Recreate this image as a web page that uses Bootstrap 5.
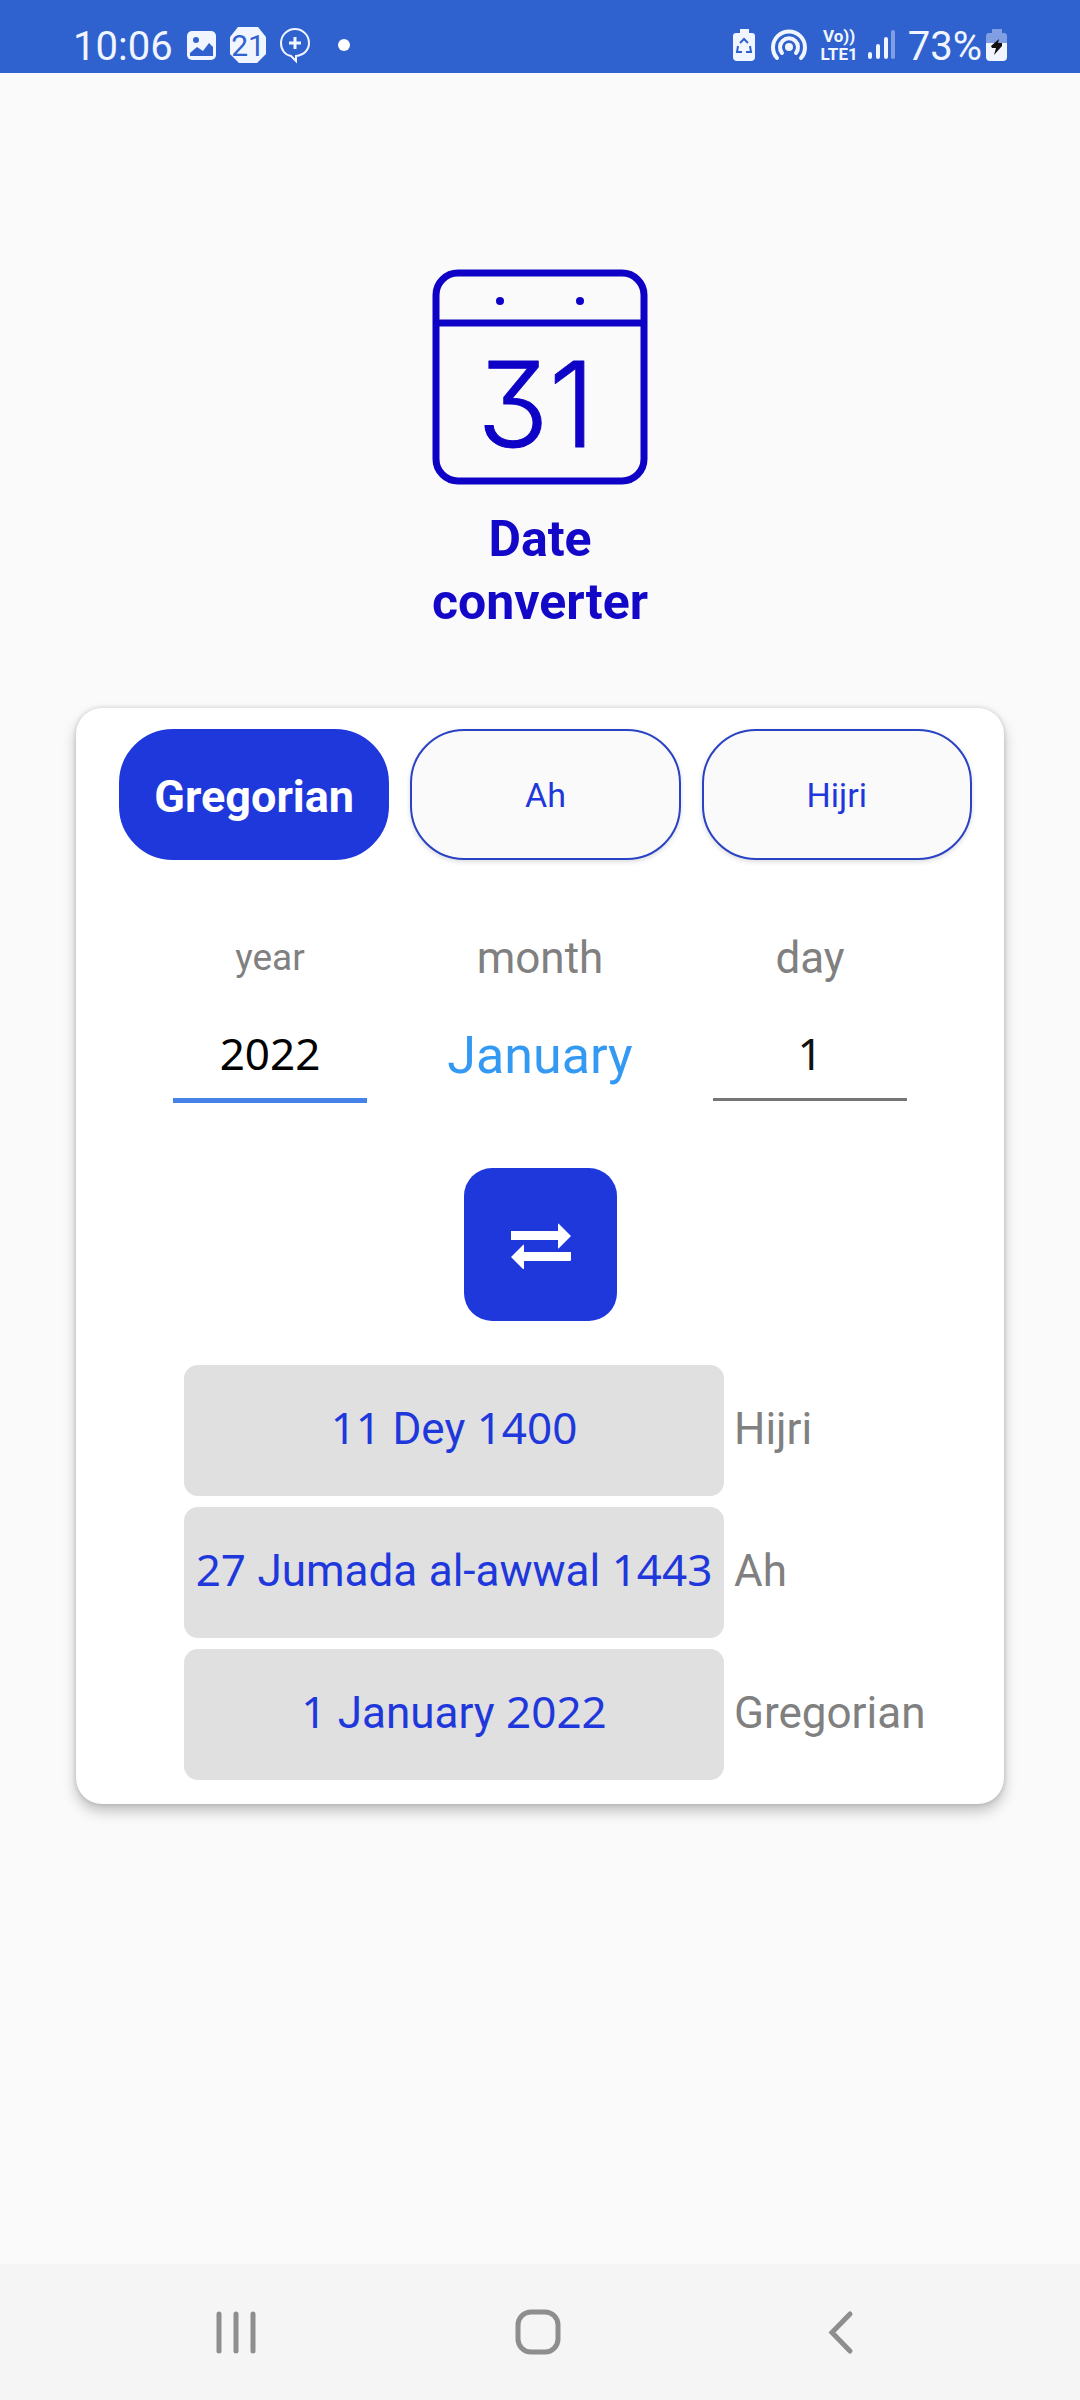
<!DOCTYPE html>
<html lang="en">
<head>
<meta charset="utf-8">
<meta name="viewport" content="width=device-width, initial-scale=1">
<title>Date converter</title>
<link href="https://cdn.jsdelivr.net/npm/bootstrap@5.3.0/dist/css/bootstrap.min.css" rel="stylesheet">
<style>
  :root { --brand: #1f38dc; --ink: #1408c8; --muted: #808080; }
  body { background: #fafafa; font-family: Roboto, sans-serif; font-size: 44px; line-height: 52px; }
  svg { display: block; flex: none; }

  .status-bar { background: #2f62cf; color: #f1f5ff; height: 73px; padding: 18px 72px 0 73px; font-size: 40px; }
  .status-group { height: 54px; }
  .status-text { line-height: 50px; padding-top: 4px; }
  .status-icons { margin-left: 14px; }
  .volte { font-size: 17px; line-height: 18px; font-weight: 700; margin-left: 10px; }
  .badge-text { font-family: Roboto, sans-serif; font-size: 30px; }

  .app-main { padding: 196px 76px 80px; }
  .cal-digits { font-family: Inter, sans-serif; font-weight: 300; font-size: 118px; font-feature-settings: "cv09"; stroke: #0e02c6; stroke-width: 1; stroke-linejoin: round; }
  .app-title { color: var(--ink); font-size: 50px; line-height: 63px; margin: 23px 0 74px; }

  .converter { background: #fff; border: 0; border-radius: 26px; padding: 21px 0 24px; box-shadow: 0 0 4px rgba(0,0,0,.16), 0 7px 14px rgba(0,0,0,.24); }
  .cal-tabs { gap: 21px; padding: 0 32px 0 43px; margin-bottom: 72px; }
  .cal-tab { flex: 1 1 0; min-width: 0; height: 131px; border-radius: 54px; border: 2px solid #2a42c4; background: #fafafa; color: var(--brand); font-size: 34px; padding: 0; box-shadow: 0 2px 5px rgba(0,0,0,.14); }
  .cal-tab.active { background: var(--brand); border-color: var(--brand); color: #fff; font-size: 45px; font-weight: 700; box-shadow: none; padding-top: 4px; }

  .date-fields { padding: 0 59px; margin-bottom: 64px; }
  .date-field { flex: 1 1 0; min-width: 0; }
  .date-field label { color: var(--muted); margin-bottom: 24px; }
  .date-field .label-sm { font-size: 37px; }
  .date-input { width: 72%; height: 93px; border: 0; border-bottom: 3px solid #757575; border-radius: 0; background: transparent; text-align: center; padding: 0; color: #111; font-family: "Noto Sans", sans-serif; outline: 0; }
  .date-input.current { height: 95px; border-bottom: 5px solid #4583e8; color: #000; }
  .month-select { appearance: none; border: 0; background: transparent; color: #3399f3; font-size: 52px; line-height: 72px; height: 96px; width: 100%; padding: 0; text-align: center; text-align-last: center; }

  .swap-btn { width: 153px; height: 153px; border-radius: 28px; border: 0; background: var(--brand); padding: 2px 0 0 2px; margin-bottom: 44px; }

  .results { gap: 11px; padding: 0 20px 0 108px; }
  .result { gap: 10px; color: var(--muted); }
  .result-name { padding-bottom: 4px; }
  .result-value { flex: 0 0 540px; height: 131px; border-radius: 14px; background: #e0e0e0; color: var(--brand); white-space: pre; padding-bottom: 6px; }
  .num { font-family: "Noto Sans", sans-serif; }

  .nav-keys { background: #f5f5f5; height: 136px; }
  .nav-key { flex: 0 0 28%; border: 0; background: transparent; padding: 0; height: 136px; }
</style>
</head>
<body>
<div class="d-flex flex-column min-vh-100">

  <header class="status-bar d-flex justify-content-between align-items-start">
    <div class="status-group d-flex align-items-center">
      <span class="status-text">10:06</span>
      <svg class="status-icons" width="170" height="54" viewBox="187 18 170 54" aria-hidden="true">
        <rect x="187" y="31" width="29" height="29" rx="5" fill="#f1f5ff"/>
        <circle cx="196" cy="40" r="3" fill="#2f62cf"/>
        <path d="M190 56v-3l7-6 6 4 6-8 4 4v9z" fill="#2f62cf"/>
        <path d="M238 27h20l8 10v17l-9 9h-18l-9-9V37z" fill="#f1f5ff"/>
        <text class="badge-text" x="248" y="56" text-anchor="middle" fill="#2f62cf">21</text>
        <path d="M295 29a14 14 0 0 1 14 14c0 7-5 12-13 13v5l-5-5c-6-1-10-6-10-13a14 14 0 0 1 14-14z" fill="none" stroke="#f1f5ff" stroke-width="2"/>
        <path d="M295 37v12M289 43h12" stroke="#f1f5ff" stroke-width="3"/>
        <circle cx="344" cy="45" r="6" fill="#fff"/>
      </svg>
    </div>
    <div class="status-group d-flex align-items-center">
      <svg width="78" height="54" viewBox="731 18 78 54" aria-hidden="true">
        <path d="M738 29h9v4h3q3 0 3 3v21q0 4-4 4h-14q-4 0-4-4V36q0-3 3-3h4z" fill="#f1f5ff"/>
        <path d="M738 43l4-4 4 4M748 46l1 6h-5M736 46l-1 6h5" fill="none" stroke="#2f62cf" stroke-width="2"/>
        <g fill="none" stroke="#f1f5ff" stroke-width="4" stroke-linecap="round">
          <path d="M775 58a16 16 0 1 1 24 0"/>
          <path d="M780 53a9 9 0 1 1 14 0"/>
        </g>
        <circle cx="787" cy="47" r="4" fill="#f1f5ff"/>
      </svg>
      <div class="volte text-center">Vo))<br>LTE1</div>
      <svg class="ms-2" width="42" height="54" viewBox="864 18 42 54" aria-hidden="true">
        <path d="M868 54v3M876 46v11M884 39v18" stroke="#f1f5ff" stroke-width="4" stroke-linecap="round"/>
        <path d="M891 32v25" stroke="#7f9fe2" stroke-width="4" stroke-linecap="round"/>
      </svg>
      <span class="status-text">73%</span>
      <svg class="ms-1" width="22" height="54" viewBox="987 18 22 54" aria-hidden="true">
        <path d="M993 29h10v4h2q3 0 3 3v7h-21v-7q0-3 3-3h3z" fill="#7f9fe2"/>
        <path d="M987 43h21v14q0 4-4 4h-13q-4 0-4-4z" fill="#f1f5ff"/>
        <path d="M1000 39l-8 7 1 2h4l-2 7 8-9v-3h-4z" fill="#111"/>
      </svg>
    </div>
  </header>

  <main class="app-main flex-grow-1">
    <svg class="mx-auto" width="216" height="216" viewBox="0 0 216 216" aria-hidden="true">
      <rect x="4" y="4" width="208" height="208" rx="22" fill="none" stroke="#0e02c6" stroke-width="7"/>
      <path d="M4 54h208" stroke="#0e02c6" stroke-width="7"/>
      <circle cx="68" cy="32" r="4" fill="#0e02c6"/>
      <circle cx="148" cy="32" r="4" fill="#0e02c6"/>
      <text class="cal-digits" x="104" y="178" text-anchor="middle" fill="#0e02c6">31</text>
    </svg>
    <h1 class="app-title fw-bold text-center">Date<br>converter</h1>

    <form class="converter card">
      <div class="cal-tabs d-flex" role="group" aria-label="Calendar">
        <button type="button" class="cal-tab active">Gregorian</button>
        <button type="button" class="cal-tab">Ah</button>
        <button type="button" class="cal-tab">Hijri</button>
      </div>

      <div class="date-fields d-flex">
        <div class="date-field d-flex flex-column align-items-center">
          <label for="year" class="label-sm">year</label>
          <input id="year" class="date-input current" type="text" inputmode="numeric" value="2022">
        </div>
        <div class="date-field d-flex flex-column align-items-center">
          <label for="month">month</label>
          <select id="month" class="month-select"><option>January</option></select>
        </div>
        <div class="date-field d-flex flex-column align-items-center">
          <label for="day">day</label>
          <input id="day" class="date-input" type="text" inputmode="numeric" value="1">
        </div>
      </div>

      <button type="button" class="swap-btn mx-auto" aria-label="Convert">
        <svg class="mx-auto" width="60" height="46" viewBox="0 0 60 46" fill="#fff" aria-hidden="true">
          <path d="M0 8h47V1q0-1 1 0l12 12-12 12q-1 1-1 0v-8H0z"/>
          <path d="M60 29H13v-7q0-1-1 0L0 34l12 12q1 1 1 0v-8h46q1 0 1-1z"/>
        </svg>
      </button>

      <div class="results d-flex flex-column">
        <div class="result d-flex align-items-center">
          <output class="result-value d-flex align-items-center justify-content-center"><span><span class="num">11 </span>Dey<span class="num"> 1400</span></span></output>
          <span class="result-name">Hijri</span>
        </div>
        <div class="result d-flex align-items-center">
          <output class="result-value d-flex align-items-center justify-content-center"><span><span class="num">27 </span>Jumada<span class="num"> </span>al-awwal<span class="num"> 1443</span></span></output>
          <span class="result-name">Ah</span>
        </div>
        <div class="result d-flex align-items-center">
          <output class="result-value d-flex align-items-center justify-content-center"><span><span class="num">1 </span>January<span class="num"> 2022</span></span></output>
          <span class="result-name">Gregorian</span>
        </div>
      </div>
    </form>
  </main>

  <nav class="nav-keys d-flex justify-content-center" aria-label="System">
    <button type="button" class="nav-key" aria-label="Recent apps">
      <svg class="mx-auto" width="48" height="46" viewBox="0 0 48 46" aria-hidden="true"><path d="M5 5v37M22 5v37M39 5v37" stroke="#8e8e8e" stroke-width="5" stroke-linecap="round"/></svg>
    </button>
    <button type="button" class="nav-key" aria-label="Home">
      <svg class="mx-auto" width="50" height="46" viewBox="0 0 50 46" aria-hidden="true"><rect x="3" y="3" width="40" height="40" rx="13" fill="none" stroke="#8e8e8e" stroke-width="5"/></svg>
    </button>
    <button type="button" class="nav-key" aria-label="Back">
      <svg class="mx-auto" width="30" height="46" viewBox="0 0 30 46" aria-hidden="true"><path d="M23 5L5 23.500 23 42" fill="none" stroke="#8e8e8e" stroke-width="5" stroke-linecap="round"/></svg>
    </button>
  </nav>
</div>
<script src="https://cdn.jsdelivr.net/npm/bootstrap@5.3.0/dist/js/bootstrap.bundle.min.js"></script>
</body>
</html>
